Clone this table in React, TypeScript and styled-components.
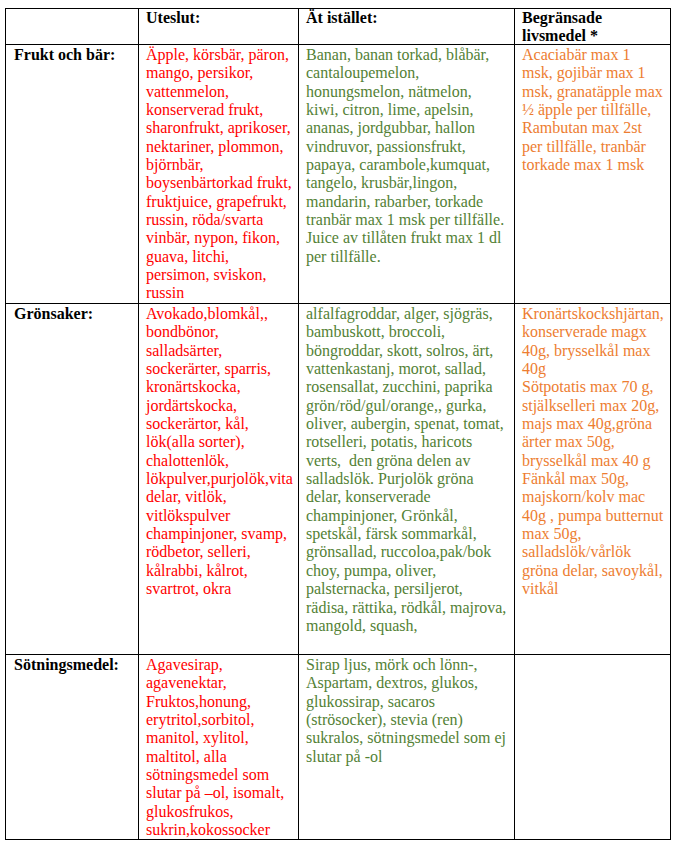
import React from "react";
import styled, { createGlobalStyle } from "styled-components";

const GlobalStyle = createGlobalStyle`
  html, body { margin: 0; padding: 0; background: #ffffff; }
  body { font-family: "Liberation Serif", "Times New Roman", serif; }
`;

type Tone = "red" | "green" | "orange";

const toneColor: Record<Tone, string> = {
  red: "#ff0000",
  green: "#538135",
  orange: "#ed7d31",
};

const Page = styled.div`
  padding: 8px 0 0 5px;
`;

const Table = styled.div`
  display: grid;
  grid-template-columns: 133px 160px 216px 156px;
  grid-template-rows: 36px 259px 351px 185px;
  width: max-content;
  border-left: 1px solid #000;
  border-top: 1px solid #000;
`;

const Cell = styled.div`
  box-sizing: border-box;
  border-right: 1px solid #000;
  border-bottom: 1px solid #000;
  padding: 0 6px 0 7px;
  white-space: pre;
  overflow: visible;
  font-family: "Liberation Serif", "Times New Roman", serif;
  font-size: 16px;
  line-height: 18.35px;
`;

const HeaderCell = styled(Cell)`
  font-weight: bold;
  color: #000;
  padding-top: 0;
`;

const LabelCell = styled(Cell)`
  font-weight: bold;
  color: #000;
  padding-left: 8px;
  padding-top: 1px;
`;

const ItemsCell = styled(Cell)<{ $tone: Tone }>`
  color: ${(p) => toneColor[p.$tone]};
  padding-top: 1px;
`;

type Row = {
  label: string;
  exclude: string[];
  instead: string[];
  limited: string[];
};

const rows: Row[] = [
  {
    label: "Frukt och bär:",
    exclude: [
      "Äpple, körsbär, päron,",
      "mango, persikor,",
      "vattenmelon,",
      "konserverad frukt,",
      "sharonfrukt, aprikoser,",
      "nektariner, plommon,",
      "björnbär,",
      "boysenbärtorkad frukt,",
      "fruktjuice, grapefrukt,",
      "russin, röda/svarta",
      "vinbär, nypon, fikon,",
      "guava, litchi,",
      "persimon, sviskon,",
      "russin",
    ],
    instead: [
      "Banan, banan torkad, blåbär,",
      "cantaloupemelon,",
      "honungsmelon, nätmelon,",
      "kiwi, citron, lime, apelsin,",
      "ananas, jordgubbar, hallon",
      "vindruvor, passionsfrukt,",
      "papaya, carambole,kumquat,",
      "tangelo, krusbär,lingon,",
      "mandarin, rabarber, torkade",
      "tranbär max 1 msk per tillfälle.",
      "Juice av tillåten frukt max 1 dl",
      "per tillfälle.",
    ],
    limited: [
      "Acaciabär max 1",
      "msk, gojibär max 1",
      "msk, granatäpple max",
      "½ äpple per tillfälle,",
      "Rambutan max 2st",
      "per tillfälle, tranbär",
      "torkade max 1 msk",
    ],
  },
  {
    label: "Grönsaker:",
    exclude: [
      "Avokado,blomkål,,",
      "bondbönor,",
      "salladsärter,",
      "sockerärter, sparris,",
      "kronärtskocka,",
      "jordärtskocka,",
      "sockerärtor, kål,",
      "lök(alla sorter),",
      "chalottenlök,",
      "lökpulver,purjolök,vita",
      "delar, vitlök,",
      "vitlökspulver",
      "champinjoner, svamp,",
      "rödbetor, selleri,",
      "kålrabbi, kålrot,",
      "svartrot, okra",
    ],
    instead: [
      "alfalfagroddar, alger, sjögräs,",
      "bambuskott, broccoli,",
      "böngroddar, skott, solros, ärt,",
      "vattenkastanj, morot, sallad,",
      "rosensallat, zucchini, paprika",
      "grön/röd/gul/orange,, gurka,",
      "oliver, aubergin, spenat, tomat,",
      "rotselleri, potatis, haricots",
      "verts,  den gröna delen av",
      "salladslök. Purjolök gröna",
      "delar, konserverade",
      "champinjoner, Grönkål,",
      "spetskål, färsk sommarkål,",
      "grönsallad, ruccoloa,pak/bok",
      "choy, pumpa, oliver,",
      "palsternacka, persiljerot,",
      "rädisa, rättika, rödkål, majrova,",
      "mangold, squash,",
    ],
    limited: [
      "Kronärtskockshjärtan,",
      "konserverade magx",
      "40g, brysselkål max",
      "40g",
      "Sötpotatis max 70 g,",
      "stjälkselleri max 20g,",
      "majs max 40g,gröna",
      "ärter max 50g,",
      "brysselkål max 40 g",
      "Fänkål max 50g,",
      "majskorn/kolv mac",
      "40g , pumpa butternut",
      "max 50g,",
      "salladslök/vårlök",
      "gröna delar, savoykål,",
      "vitkål",
    ],
  },
  {
    label: "Sötningsmedel:",
    exclude: [
      "Agavesirap,",
      "agavenektar,",
      "Fruktos,honung,",
      "erytritol,sorbitol,",
      "manitol, xylitol,",
      "maltitol, alla",
      "sötningsmedel som",
      "slutar på –ol, isomalt,",
      "glukosfrukos,",
      "sukrin,kokossocker",
    ],
    instead: [
      "Sirap ljus, mörk och lönn-,",
      "Aspartam, dextros, glukos,",
      "glukossirap, sacaros",
      "(strösocker), stevia (ren)",
      "sukralos, sötningsmedel som ej",
      "slutar på -ol",
    ],
    limited: [],
  },
];

export default function App() {
  return (
    <>
      <GlobalStyle />
      <Page>
        <Table>
          <HeaderCell />
          <HeaderCell>Uteslut:</HeaderCell>
          <HeaderCell>Ät istället:</HeaderCell>
          <HeaderCell>{"Begränsade\nlivsmedel *"}</HeaderCell>
          {rows.map((r) => (
            <React.Fragment key={r.label}>
              <LabelCell>{r.label}</LabelCell>
              <ItemsCell $tone="red">{r.exclude.join("\n")}</ItemsCell>
              <ItemsCell $tone="green">{r.instead.join("\n")}</ItemsCell>
              <ItemsCell $tone="orange">{r.limited.join("\n")}</ItemsCell>
            </React.Fragment>
          ))}
        </Table>
      </Page>
    </>
  );
}
